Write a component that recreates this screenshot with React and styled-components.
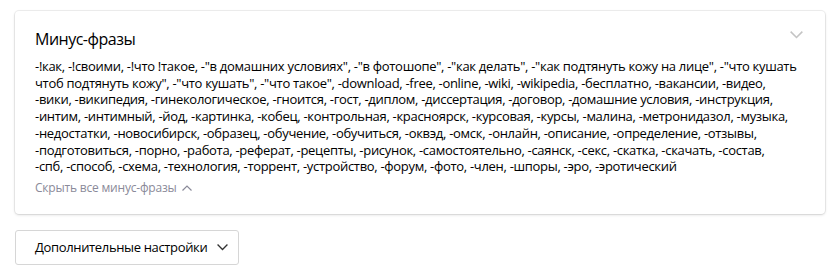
import styled, { createGlobalStyle } from "styled-components";

const GlobalStyle = createGlobalStyle`
  body {
    margin: 0;
    background: #fff;
    font-family: "Open Sans", "Noto Sans", Arial, sans-serif;
    color: #000;
  }
`;

// строки разбиты так же, как в исходном интерфейсе
const phraseLines = [
  '-!как, -!своими, -!что !такое, -"в домашних условиях", -"в фотошопе", -"как делать", -"как подтянуть кожу на лице", -"что кушать',
  'чтоб подтянуть кожу", -"что кушать", -"что такое", -download, -free, -online, -wiki, -wikipedia, -бесплатно, -вакансии, -видео,',
  "-вики, -википедия, -гинекологическое, -гноится, -гост, -диплом, -диссертация, -договор, -домашние условия, -инструкция,",
  "-интим, -интимный, -йод, -картинка, -кобец, -контрольная, -красноярск, -курсовая, -курсы, -малина, -метронидазол, -музыка,",
  "-недостатки, -новосибирск, -образец, -обучение, -обучиться, -оквэд, -омск, -онлайн, -описание, -определение, -отзывы,",
  "-подготовиться, -порно, -работа, -реферат, -рецепты, -рисунок, -самостоятельно, -саянск, -секс, -скатка, -скачать, -состав,",
  "-спб, -способ, -схема, -технология, -торрент, -устройство, -форум, -фото, -член, -шпоры, -эро, -эротический",
];

function Chevron({ up, size = 10, color = "#999" }) {
  return (
    <svg width={size} height={size * 0.6} viewBox="0 0 10 6" fill="none">
      <path
        d={up ? "M0.5 5.5L5 1L9.5 5.5" : "M0.5 0.5L5 5L9.5 0.5"}
        stroke={color}
        strokeWidth="1.2"
      />
    </svg>
  );
}

function App() {
  return (
    <>
      <GlobalStyle />
      <Page>
        <Card>
          <Header>
            <Title>Минус-фразы</Title>
            <Toggle>
              <Chevron size={13} color="#c4c4c4" />
            </Toggle>
          </Header>
          <Phrases>
            {phraseLines.map((line, i) => (
              <Line key={i}>{line}</Line>
            ))}
          </Phrases>
          <HideLink>
            Скрыть все минус-фразы
            <Chevron up size={10} color="#8a8a99" />
          </HideLink>
        </Card>
        <MoreButton>
          Дополнительные настройки
          <Chevron size={11} color="#333" />
        </MoreButton>
      </Page>
    </>
  );
}
export default App;

const Page = styled.div`
  padding: 11px 12px 0 15px;
  display: flex;
  flex-direction: column;
  align-items: flex-start;
  gap: 16px;
`;

const Card = styled.div`
  box-sizing: border-box;
  width: 810px;
  padding: 18px 20px 17px;
  border-radius: 4px;
  background: #fff;
  box-shadow: 0 0 0 1px rgba(0, 0, 0, 0.06), 0 1px 3px rgba(0, 0, 0, 0.14);
`;

const Header = styled.div`
  display: flex;
  justify-content: space-between;
  align-items: flex-start;
`;

const Title = styled.h2`
  margin: 0;
  font-size: 16px;
  font-weight: 400;
  line-height: 20px;
  letter-spacing: -0.5px;
  color: #000;
`;

const Toggle = styled.div`
  margin-top: 2px;
  margin-right: 2px;
  display: flex;
`;

const Phrases = styled.p`
  margin: 9px 0 0;
  font-size: 13px;
  line-height: 16.7px;
  letter-spacing: -0.3px;
  color: #000;
`;

const Line = styled.span`
  display: block;
  white-space: nowrap;
`;

const HideLink = styled.div`
  margin-top: 4px;
  display: inline-flex;
  align-items: center;
  gap: 5px;
  font-size: 12px;
  line-height: 16px;
  letter-spacing: -0.2px;
  color: #8a8a99;
  cursor: pointer;
`;

const MoreButton = styled.button`
  box-sizing: border-box;
  height: 35px;
  width: 224px;
  display: flex;
  align-items: center;
  gap: 10px;
  padding: 0 0 0 19px;
  border: 1px solid #d6d6d6;
  border-radius: 3px;
  background: #fff;
  font-family: "Open Sans", "Noto Sans", Arial, sans-serif;
  font-size: 13px;
  letter-spacing: -0.35px;
  color: #000;
  cursor: pointer;
`;
